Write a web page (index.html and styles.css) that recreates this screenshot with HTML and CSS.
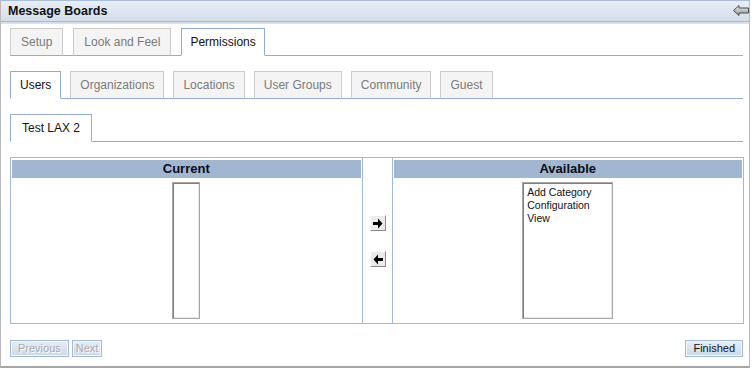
FILE: index.html
```html
<!DOCTYPE html>
<html>
<head>
<meta charset="utf-8">
<link rel="stylesheet" href="styles.css">
</head>
<body>
<div class="portlet">
  <div class="titlebar">
    <span class="title">Message Boards</span>
    <svg class="back" width="16" height="11" viewBox="0 0 16 11">
      <defs>
        <linearGradient id="bg" x1="0" y1="0" x2="0" y2="1">
          <stop offset="0" stop-color="#f4f4f4"/>
          <stop offset="1" stop-color="#8d8d8d"/>
        </linearGradient>
      </defs>
      <polygon points="0.5,5.5 6,0.5 6,3 15.5,3 15.5,8 6,8 6,10.5" fill="url(#bg)" stroke="#4a4a4a" stroke-width="1" stroke-linejoin="miter"/>
    </svg>
  </div>
  <div class="content">
    <div class="tabs main">
      <span class="tab">Setup</span>
      <span class="tab">Look and Feel</span>
      <span class="tab active narrow-tab">Permissions</span>
    </div>
    <div class="tabs">
      <span class="tab active">Users</span>
      <span class="tab">Organizations</span>
      <span class="tab">Locations</span>
      <span class="tab">User Groups</span>
      <span class="tab">Community</span>
      <span class="tab">Guest</span>
    </div>
    <div class="tabs">
      <span class="tab active wide-tab">Test LAX 2</span>
    </div>
    <div class="selector">
      <div class="col">
        <div class="colhead">Current</div>
        <div class="listwrap"><div class="listbox narrow"></div></div>
      </div>
      <div class="mid">
        <span class="arrow">
          <svg width="14" height="14" viewBox="0 0 14 14"><polygon points="2,6 7,6 7,2.5 11.5,7.5 7,12.5 7,9 2,9" fill="#000"/></svg>
        </span>
        <span class="arrow">
          <svg width="14" height="14" viewBox="0 0 14 14"><polygon points="12,6 7,6 7,2.5 2.5,7.5 7,12.5 7,9 12,9" fill="#000"/></svg>
        </span>
      </div>
      <div class="col">
        <div class="colhead">Available</div>
        <div class="listwrap">
          <div class="listbox wide">
            <div class="opt">Add Category</div>
            <div class="opt">Configuration</div>
            <div class="opt">View</div>
          </div>
        </div>
      </div>
    </div>
    <div class="footer">
      <div class="navbtns">
        <span class="btn disabled">Previous</span>
        <span class="btn disabled tight">Next</span>
      </div>
      <span class="btn">Finished</span>
    </div>
  </div>
</div>
</body>
</html>
```

FILE: styles.css
```css
html, body {
  margin: 0;
  padding: 0;
  background: #ffffff;
}

body {
  font-family: "Liberation Sans", Arial, sans-serif;
  width: 752px;
  height: 369px;
  overflow: hidden;
}

.portlet {
  width: 748px;
  border-left: 1px solid #b9b9b9;
  border-right: 1px solid #b9b9b9;
  border-bottom: 2px solid #a6a6a6;
  margin-right: 2px;
  background: #fff;
}

.titlebar {
  height: 20px;
  border-top: 1px solid #a9bdd7;
  border-bottom: 1px solid #a4b8d3;
  box-shadow: 0 2px 0 #d7e1ec;
  background: linear-gradient(#e8eef5, #d3deea);
  display: flex;
  align-items: center;
  justify-content: space-between;
  padding: 0 0 0 7px;
}

.title {
  font-weight: bold;
  font-size: 12.5px;
  color: #111;
}

.back {
  margin-top: -2px;
}

.content {
  padding: 6px 5px 9px 9px;
}

.tabs {
  display: flex;
  height: 27px;
  border-bottom: 1px solid #95acca;
  margin-bottom: 15px;
  margin-right: 1px;
}

.tab {
  box-sizing: border-box;
  height: 28px;
  margin-bottom: -1px;
  margin-right: 9px;
  padding: 0 9px;
  display: flex;
  align-items: center;
  font-size: 12px;
  color: #7a7a7a;
  background: #f4f4f4;
  border: 1px solid #cccccc;
  border-bottom: 1px solid #95acca;
}

.tabs.main .tab {
  padding: 0 10px;
  margin-right: 10px;
}

.tabs.main .tab.narrow-tab {
  padding: 0 8px;
}

.tab.active {
  background: #fff;
  color: #111;
  border: 1px solid #95acca;
  border-bottom: 1px solid #fff;
}

.tab.wide-tab {
  padding: 0 11px;
}

.selector {
  display: flex;
  height: 165px;
  border: 1px solid #a3b8d3;
}

.col {
  flex: 1;
  padding: 2px 1px 4px 1px;
  display: flex;
  flex-direction: column;
}

.colhead {
  height: 18px;
  background: #a1b6d1;
  color: #0b0b18;
  font-weight: bold;
  font-size: 13px;
  text-align: center;
  line-height: 18px;
  margin-bottom: 4px;
}

.listwrap {
  display: flex;
  justify-content: center;
}

.listbox {
  box-sizing: border-box;
  height: 137px;
  border: 1px solid #a8a8a8;
  box-shadow: inset 1px 1px 0 #7f7f7f, inset -1px -1px 0 #e6e6e6;
  background: #fff;
  padding: 3px 4px;
}

.listbox.narrow {
  width: 28px;
}

.listbox.wide {
  width: 91px;
}

.opt {
  font-size: 10.5px;
  line-height: 13px;
  color: #111;
  white-space: nowrap;
}

.mid {
  width: 29px;
  border-left: 1px solid #a3b8d3;
  border-right: 1px solid #a3b8d3;
  display: flex;
  flex-direction: column;
  align-items: center;
  justify-content: center;
  gap: 20px;
}

.arrow {
  box-sizing: border-box;
  width: 16px;
  height: 16px;
  background: #ebebeb;
  border: 1px solid;
  border-color: #ffffff #8a8a8a #8a8a8a #ffffff;
  display: flex;
  align-items: center;
  justify-content: center;
  margin-left: 1px;
}

.footer {
  display: flex;
  justify-content: space-between;
  margin-top: 16px;
  margin-right: 1px;
}

.navbtns {
  display: flex;
  gap: 3px;
}

.btn {
  box-sizing: border-box;
  height: 17px;
  padding: 0 7px;
  font-size: 11px;
  line-height: 15px;
  color: #111;
  border: 1px solid #a3b8d3;
  box-shadow: inset 0 0 0 1px #f4f7fb;
  background: linear-gradient(#e6edf4, #ccd9e7);
}

.btn.disabled {
  color: #a9a9a9;
  text-shadow: 1px 1px 0 #ffffff;
}

.btn.tight {
  padding: 0 3px;
}
```
